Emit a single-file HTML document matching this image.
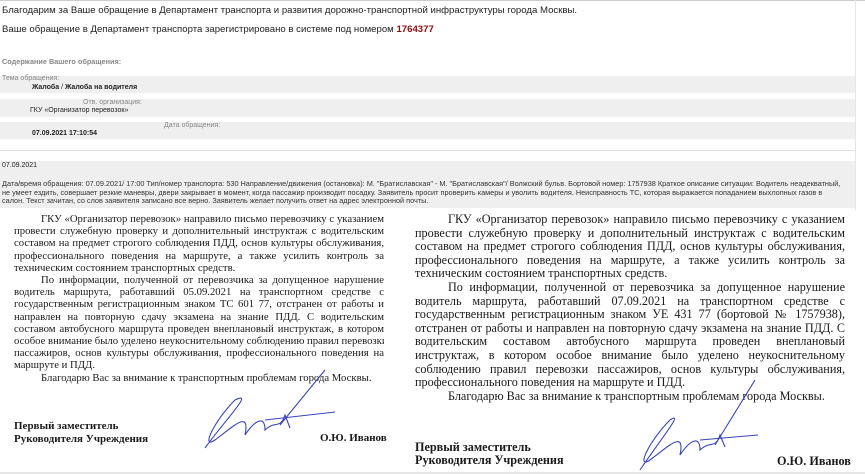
<!DOCTYPE html>
<html><head><meta charset="utf-8"><style>
*{margin:0;padding:0}
body{width:865px;height:474px;background:#fff;position:relative;overflow:hidden;font-family:"Liberation Sans",Arial,sans-serif;color:#222}
.a{position:absolute;white-space:nowrap}
.band{position:absolute;left:0;width:855px;background:#efefef}
.L{position:absolute;font-family:"Liberation Serif","Times New Roman",serif;color:#1a1a1a}
.L div{text-align:justify;text-align-last:justify;white-space:nowrap;overflow:hidden}
.L div.e{text-align-last:left}
.L div.i{text-indent:27px}
.sg{position:absolute;font-family:"Liberation Serif",serif;font-weight:bold;color:#1a1a1a}
</style></head><body>
<div style="position:absolute;left:0;top:0;width:865px;height:1px;background:#ccc"></div>
<div style="position:absolute;left:855px;top:0;width:1px;height:210px;background:#e6e6e6"></div>
<div class="a" style="left:2px;top:5px;font-size:9.6px">Благодарим за Ваше обращение в Департамент транспорта и развития дорожно-транспортной инфраструктуры города Москвы.</div>
<div class="a" style="left:2px;top:24px;font-size:9.6px">Ваше обращение в Департамент транспорта зарегистрировано в системе под номером <b style="color:#8b0f0f">1764377</b></div>
<div class="a" style="left:2px;top:57px;font-size:7.3px;font-weight:bold;color:#888">Содержание Вашего обращения:</div>
<div class="band" style="top:76px;height:17px"></div>
<div class="band" style="top:99px;height:18px"></div>
<div class="band" style="top:122px;height:17px"></div>
<div class="a" style="left:2px;top:75px;font-size:7px;color:#888">Тема обращения:</div>
<div class="a" style="left:32px;top:84px;font-size:7px;font-weight:bold">Жалоба <span style="font-weight:normal">/</span> Жалоба на водителя</div>
<div class="a" style="left:83px;top:99px;font-size:7px;color:#888">Отв. организация:</div>
<div class="a" style="left:30px;top:107px;font-size:7px">ГКУ «Организатор перевозок»</div>
<div class="a" style="left:164px;top:122px;font-size:7px;color:#888">Дата обращения:</div>
<div class="a" style="left:32px;top:130px;font-size:7px;font-weight:bold">07.09.2021 17:10:54</div>
<div style="position:absolute;left:0;top:150px;width:855px;height:1px;background:#e0e0e0"></div>
<div class="band" style="top:161px;height:47px"></div>
<div class="a" style="left:2px;top:162px;font-size:7px">07.09.2021</div>
<div class="a" style="left:2px;top:180px;font-size:7.3px;line-height:8.5px;color:#333">Дата/время обращения: 07.09.2021/ 17:00 Тип/номер транспорта: 530 Направление/движения (остановка): М. "Братиславская" - М. "Братиславская"/ Волжский бульв. Бортовой номер: 1757938 Краткое описание ситуации: Водитель неадекватный,<br>не умеет ездить, совершает резкие маневры, двери закрывает в момент, когда пассажир производит посадку. Заявитель просит проверить камеры и уволить водителя. Неисправность ТС, которая выражается попаданием выхлопных газов в<br>салон. Текст зачитан, со слов заявителя записано все верно. Заявитель желает получить ответ на адрес электронной почты.</div>

<div class="L" style="left:14px;top:213px;width:370px;font-size:10.7px;line-height:12.2px">
<div class="i">ГКУ «Организатор перевозок» направило письмо перевозчику с указанием</div>
<div>провести служебную проверку и дополнительный инструктаж с водительским</div>
<div>составом на предмет строгого соблюдения ПДД, основ культуры обслуживания,</div>
<div>профессионального поведения на маршруте, а также усилить контроль за</div>
<div class="e">техническим состоянием транспортных средств.</div>
<div class="i">По информации, полученной от перевозчика за допущенное нарушение</div>
<div>водитель маршрута, работавший 05.09.2021 на транспортном средстве с</div>
<div>государственным регистрационным знаком ТС 601 77, отстранен от работы и</div>
<div>направлен на повторную сдачу экзамена на знание ПДД. С водительским</div>
<div>составом автобусного маршрута проведен внеплановый инструктаж, в котором</div>
<div>особое внимание было уделено неукоснительному соблюдению правил перевозки</div>
<div>пассажиров, основ культуры обслуживания, профессионального поведения на</div>
<div class="e">маршруте и ПДД.</div>
<div class="i e">Благодарю Вас за внимание к транспортным проблемам города Москвы.</div>
</div>
<div class="sg" style="left:14px;top:420px;font-size:11px;line-height:12.5px">Первый заместитель<br>Руководителя Учреждения</div>
<div class="sg" style="left:320px;top:432px;font-size:11px">О.Ю. Иванов</div>
<svg style="position:absolute;left:195px;top:360px" width="140" height="95" viewBox="0 0 140 95"><path d="M10 88 C30 60 60 30 40 40 C20 60 5 90 20 80 C40 65 55 50 50 75 C60 60 70 55 70 70 C80 60 85 70 90 55 L95 68 M85 65 L130 10 M70 60 L140 52" fill="none" stroke="#3a44b8" stroke-width="1.1"/></svg>

<div class="L" style="left:415px;top:213px;width:430px;font-size:12.2px;line-height:13.6px">
<div class="i" style="text-indent:33px">ГКУ «Организатор перевозок» направило письмо перевозчику с указанием</div>
<div>провести служебную проверку и дополнительный инструктаж с водительским</div>
<div>составом на предмет строгого соблюдения ПДД, основ культуры обслуживания,</div>
<div>профессионального поведения на маршруте, а также усилить контроль за</div>
<div class="e">техническим состоянием транспортных средств.</div>
<div class="i" style="text-indent:33px">По информации, полученной от перевозчика за допущенное нарушение</div>
<div>водитель маршрута, работавший 07.09.2021 на транспортном средстве с</div>
<div>государственным регистрационным знаком УЕ 431 77 (бортовой № 1757938),</div>
<div>отстранен от работы и направлен на повторную сдачу экзамена на знание ПДД. С</div>
<div>водительским составом автобусного маршрута проведен внеплановый</div>
<div>инструктаж, в котором особое внимание было уделено неукоснительному</div>
<div>соблюдению правил перевозки пассажиров, основ культуры обслуживания,</div>
<div class="e">профессионального поведения на маршруте и ПДД.</div>
<div class="i e" style="text-indent:33px">Благодарю Вас за внимание к транспортным проблемам города Москвы.</div>
</div>
<div class="sg" style="left:415px;top:441px;font-size:12.2px;line-height:13px">Первый заместитель<br>Руководителя Учреждения</div>
<div class="sg" style="left:777px;top:454px;font-size:12.2px">О.Ю. Иванов</div>
<svg style="position:absolute;left:630px;top:375px" width="130" height="99" viewBox="0 0 130 99"><path d="M10 95 C30 65 55 35 40 45 C20 65 5 95 20 85 C40 70 55 55 50 80 C60 65 70 60 70 75 C80 65 85 75 90 60 L95 72 M85 70 L125 5 M70 65 L128 60" fill="none" stroke="#3a44b8" stroke-width="1.1"/></svg>
<div style="position:absolute;left:0;top:472px;width:865px;height:2px;background:#e6e6e6"></div>
</body></html>
